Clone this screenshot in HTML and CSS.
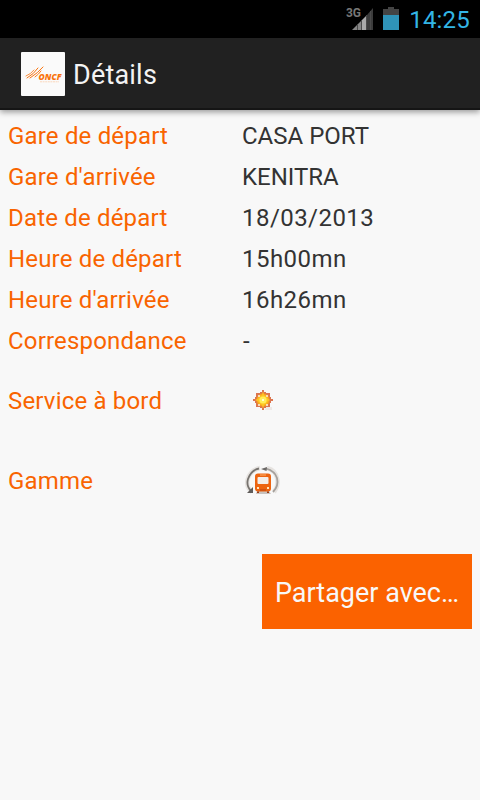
FILE: index.html
```
<!DOCTYPE html>
<html lang="fr">
<head>
  <meta charset="UTF-8">
  <title>Détails</title>
  <link rel="stylesheet" href="styles.css">
</head>
<body>

<div class="status-bar">
  <svg class="signal" width="30" height="26" viewBox="0 0 30 26">
    <text class="network" x="0" y="11" textLength="15">3G</text>
    <path d="M6 24L15 15V24Z" fill="#858585"/>
    <path d="M15 15L21 9V24H15Z" fill="#aaa"/>
    <path d="M21 9L27 2V24H21Z" fill="#3c3c3c"/>
    <path d="M11.5 18V24M15.5 14V24M20.500 9V24M24.5 5V24" stroke="#4a4a4a" stroke-width="1"/>
  </svg>
  <svg class="battery" width="16" height="24" viewBox="0 0 16 24">
    <path d="M0 2H5V0H11V2H16V8H0Z" fill="#444"/>
    <path d="M0 8H16V23H0Z" fill="#2f93b8"/>
  </svg>
  <span class="clock">14:25</span>
</div>

<div class="action-bar">
  <svg class="logo" width="44" height="44" viewBox="0 0 44 44">
    <rect width="44" height="44" rx="1" fill="#fafafa"/>
    <g fill="none" stroke="#f9730c" stroke-linecap="round">
      <path d="M5 24Q10 22 13 18" stroke-width=".8"/>
      <path d="M6 26Q13 22 17 16" stroke-width="1"/>
      <path d="M9 26Q17 21 22 15" stroke-width="1"/>
      <path d="M14 25Q18 22 20 19" stroke-width=".9"/>
    </g>
    <text class="logo-text" x="17.5" y="28" textLength="23" lengthAdjust="spacingAndGlyphs">ONCF</text>
    <path d="M19 29.8H38" stroke="#fbc9a2" stroke-width=".7" stroke-dasharray="2 .6"/>
  </svg>
  <h1 class="title">Détails</h1>
</div>

<div class="details">
  <div class="row"><span class="label">Gare de départ</span><span class="value">CASA PORT</span></div>
  <div class="row"><span class="label">Gare d'arrivée</span><span class="value">KENITRA</span></div>
  <div class="row"><span class="label">Date de départ</span><span class="value number">18/03/2013</span></div>
  <div class="row"><span class="label">Heure de départ</span><span class="value number">15h00mn</span></div>
  <div class="row"><span class="label">Heure d'arrivée</span><span class="value number">16h26mn</span></div>
  <div class="row"><span class="label">Correspondance</span><span class="value dash">-</span></div>
  <div class="row tall">
    <span class="label">Service à bord</span>
    <svg class="sun" width="22" height="22" viewBox="0 0 22 22">
      <defs>
        <radialGradient id="glow">
          <stop offset="0" stop-color="#fff9a8"/>
          <stop offset=".35" stop-color="#ffe32e"/>
          <stop offset=".75" stop-color="#fdb31c"/>
          <stop offset="1" stop-color="#e98a2b"/>
        </radialGradient>
      </defs>
      <path d="M14 17H20V20H13Z" fill="#eee8e6"/>
      <path d="M10 0H12V2H14V3H18V7H19V9H21V11H19V13H18V17H14V18H12V20H10V18H8V17H4V13H3V11H1V9H3V7H4V3H8V2H10Z" fill="#dc7650"/>
      <circle cx="11" cy="10" r="6.8" fill="url(#glow)"/>
      <path d="M11 1L12.5 7L18 10L12.5 13L11 19L9.5 13L3 10L9.5 7Z" fill="#ffc524"/>
      <circle cx="11" cy="10" r="3.6" fill="#ffee59"/>
      <path d="M6 5H8V7H6ZM14 5H16V7H14ZM6 14H8V16H6ZM14 14H16V16H14Z" fill="#f8ddb5"/>
      <path d="M10 9H12V11H10Z" fill="#fffccf"/>
    </svg>
  </div>
  <div class="row tall">
    <span class="label">Gamme</span>
    <svg class="train" width="36" height="32" viewBox="0 0 36 32">
      <g fill="none" stroke="#e6e3e0" stroke-width="4.5">
        <path d="M7 27Q1 22 2.500 15Q5 5 15 3"/>
        <path d="M22 3Q31 5 32.500 15Q33 22 29 27"/>
      </g>
      <path d="M6 26Q1 21 3 14Q6 5 14 3.500" fill="none" stroke="#77736f" stroke-width="1.8"/>
      <path d="M21 3.500Q30 6 32 13Q34 21 28 27" fill="none" stroke="#a5a09c" stroke-width="1.8"/>
      <path d="M2 28H8V22Z" fill="#605d5b"/>
      <path d="M16 4L22 2L21.500 6Z" fill="#6b6866"/>
      <path d="M12 26H24L26 29H11Z" fill="#c9c3bf"/>
      <rect x="10" y="8.500" width="16" height="18" rx="3" fill="#ed6410"/>
      <path d="M13 26.500V28M23 26.500V28" stroke="#983d18" stroke-width="2"/>
      <rect x="12.500" y="12" width="11" height="7" rx="1" fill="#f4eee9"/>
      <path d="M15 10H21" stroke="#ffb16b"/>
      <path d="M12 22H14V24H12ZM22 22H24V24H22Z" fill="#ffe4be"/>
      <path d="M15 25H21" stroke="#b94513"/>
    </svg>
  </div>
  <button class="share">Partager avec…</button>
</div>

</body>
</html>
```
FILE: styles.css
```
body {
  margin: 0;
  height: 800px;
  background-color: #f8f8f8;
  font-family: Roboto, sans-serif;
  overflow: hidden;
}

.status-bar {
  display: flex;
  justify-content: flex-end;
  height: 38px;
  padding-right: 10px;
  background-color: #000;
}

.signal {
  margin: 6px 7px 0 0;
}

.network {
  font-size: 12px;
  font-weight: bold;
  fill: #777;
}

.battery {
  margin: 7px 10px 0 0;
}

.clock {
  color: #33b5e5;
  font-size: 24px;
  line-height: 40px;
  letter-spacing: 0.2px;
}

.action-bar {
  display: flex;
  align-items: center;
  box-sizing: border-box;
  height: 72px;
  padding: 2px 0 0 21px;
  border-bottom: 2px solid #151515;
  background-color: #212121;
  box-shadow: 0 2px 6px rgba(0, 0, 0, 0.4);
}

.logo-text {
  font-family: "Open Sans", sans-serif;
  font-size: 8.5px;
  font-weight: 800;
  font-style: italic;
  fill: #f9730c;
}

.title {
  margin: 2px 0 0 8px;
  color: #f3f3f3;
  font-size: 27px;
  font-weight: normal;
  letter-spacing: 0.2px;
}

.details {
  display: flex;
  flex-direction: column;
  padding: 5px 8px 0;
}

.row {
  display: flex;
  align-items: center;
  height: 41px;
  font-size: 24px;
}

.tall {
  height: 80px;
}

.label {
  width: 234px;
  color: #f96400;
  letter-spacing: 0.18px;
}

.value {
  color: #333;
}

.number {
  letter-spacing: 0.45px;
}

.dash {
  padding-left: 1px;
}

.sun {
  margin-left: 10px;
}

.train {
  margin-left: 3px;
}

.share {
  align-self: flex-end;
  width: 210px;
  height: 75px;
  margin-top: 33px;
  padding: 2px 0 0;
  border: none;
  background-color: #fb6200;
  color: #f8f8f8;
  font-family: inherit;
  font-size: 27px;
}
```
